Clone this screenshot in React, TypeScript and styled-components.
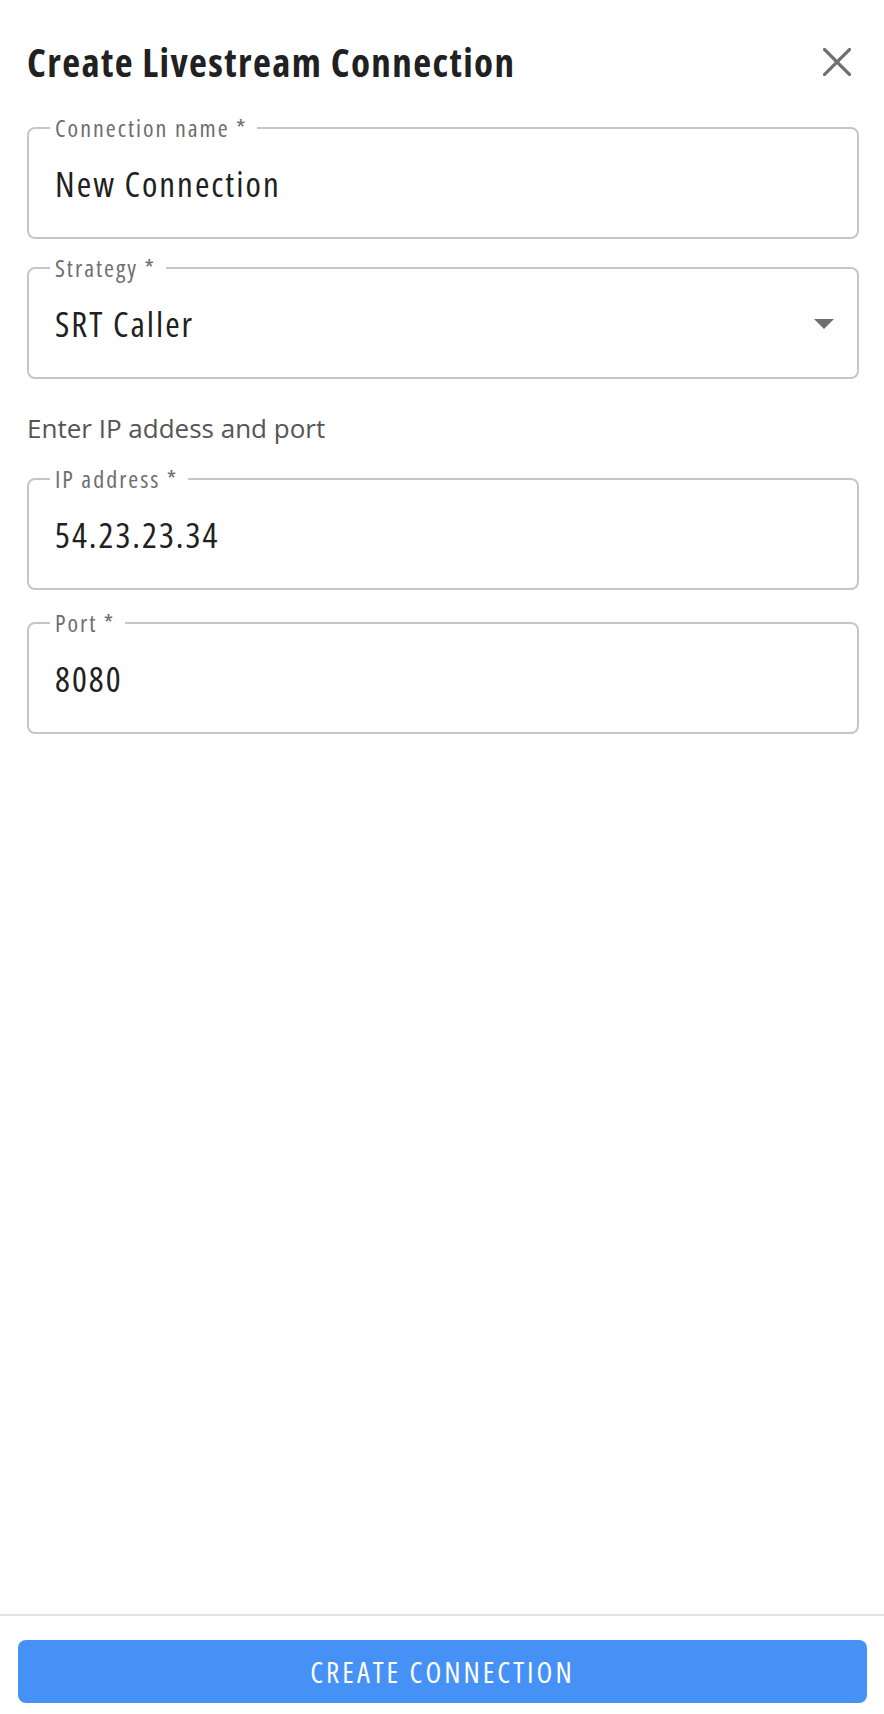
import React from "react";
import styled, { createGlobalStyle } from "styled-components";

const GlobalStyle = createGlobalStyle`
  html, body {
    margin: 0;
    padding: 0;
    background: #ffffff;
  }
  body {
    font-family: "Open Sans", "Noto Sans", Arial, sans-serif;
    font-stretch: condensed;
    color: #212121;
  }
`;

const Page = styled.div`
  min-height: 100vh;
  display: flex;
  flex-direction: column;
`;

const Content = styled.div`
  flex: 1;
  padding: 0 25px 0 27px;
`;

const Header = styled.div`
  display: flex;
  align-items: center;
  justify-content: space-between;
  padding-top: 39px;
  height: 46px;
`;

const Title = styled.h1`
  margin: 0;
  font-size: 39px;
  line-height: 46px;
  font-weight: 700;
  letter-spacing: 1.4px;
  color: #212121;
`;

const CloseButton = styled.button`
  border: 0;
  background: none;
  padding: 0;
  margin-right: 8px;
  width: 28px;
  height: 28px;
  display: flex;
  cursor: pointer;
  color: #707070;
`;

const Field = styled.fieldset<{ $top: number }>`
  margin: ${(p) => p.$top}px 0 0;
  padding: 24px 26px 33px;
  border: 2px solid #c6c6c6;
  border-radius: 8px;
  min-width: 0;
  > legend {
    margin-left: -5px;
    padding: 0 10px 0 5px;
    font-size: 24px;
    line-height: 24px;
    letter-spacing: 2px;
    color: #6e6e6e;
  }
`;

const Value = styled.div`
  font-size: 35px;
  line-height: 40px;
  letter-spacing: 2px;
  color: #212121;
  display: flex;
  align-items: center;
  justify-content: space-between;
`;

const Arrow = styled.svg`
  margin-right: -3px;
  color: #6e6e6e;
`;

const Hint = styled.p`
  margin: 34px 0 0;
  font-stretch: normal;
  font-size: 26px;
  line-height: 30px;
  color: #555555;
`;

const Footer = styled.div`
  border-top: 2px solid #e2e2e2;
  padding: 24px 17px 11px 18px;
`;

const PrimaryButton = styled.button`
  width: 100%;
  height: 63px;
  border: 0;
  border-radius: 8px;
  background: #4691f6;
  color: #ffffff;
  font-family: inherit;
  font-stretch: condensed;
  font-size: 29px;
  font-weight: 500;
  letter-spacing: 3px;
  cursor: pointer;
`;

type FieldProps = {
  label: string;
  value: string;
  top: number;
  select?: boolean;
};

const TextField: React.FC<FieldProps> = ({ label, value, top, select }) => (
  <Field $top={top}>
    <legend>{label} *</legend>
    <Value>
      <span>{value}</span>
      {select && (
        <Arrow width="20" height="10" viewBox="0 0 20 10">
          <path d="M0 0h20L10 10z" fill="currentColor" />
        </Arrow>
      )}
    </Value>
  </Field>
);

const App: React.FC = () => {
  return (
    <Page>
      <GlobalStyle />
      <Content>
        <Header>
          <Title>Create Livestream Connection</Title>
          <CloseButton aria-label="close">
            <svg width="28" height="28" viewBox="0 0 28 28">
              <path
                d="M1.5 1.5l25 25M26.5 1.5l-25 25"
                stroke="currentColor"
                strokeWidth="3.2"
                strokeLinecap="square"
              />
            </svg>
          </CloseButton>
        </Header>
        <TextField label="Connection name" value="New Connection" top={31} />
        <TextField label="Strategy" value="SRT Caller" top={17} select />
        <Hint>Enter IP addess and port</Hint>
        <TextField label="IP address" value="54.23.23.34" top={24} />
        <TextField label="Port" value="8080" top={21} />
      </Content>
      <Footer>
        <PrimaryButton>CREATE CONNECTION</PrimaryButton>
      </Footer>
    </Page>
  );
};

export default App;
